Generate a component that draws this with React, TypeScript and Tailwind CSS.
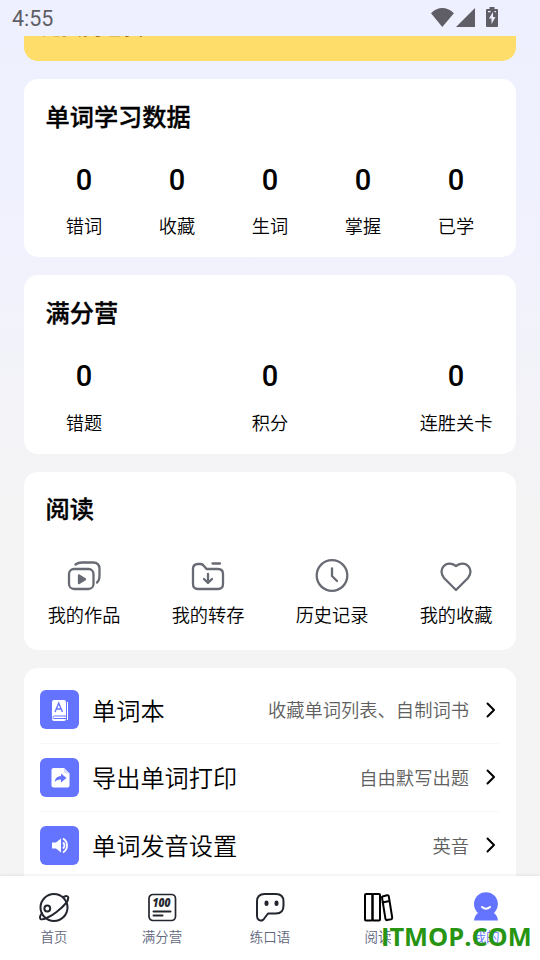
import type { ReactNode } from "react";

function Stats({ title, items }: { title: string; items: string[] }) {
  return (
    <section className="h-[178.5px] shrink-0 rounded-[14px] bg-white px-6">
      <h2 className="-ml-[2.5px] pt-[21px] text-[24.2px] font-medium leading-[31px] text-black [-webkit-text-stroke:0.35px_black]">{title}</h2>
      <div className="mt-[31px] flex justify-between">
        {items.map((label) => (
          <div key={label} className="flex w-[72px] flex-col items-center">
            <span className="font-[Roboto] text-[29px] font-medium leading-9">0</span>
            <span className="mt-[14.5px] text-[18.2px] font-[350] leading-[27px] whitespace-nowrap">{label}</span>
          </div>
        ))}
      </div>
    </section>
  );
}

function Shortcut({ label, children }: { label: string; children: ReactNode }) {
  return (
    <div className="flex w-[72px] flex-col items-center">
      <svg width="36" height="36" viewBox="0 0 36 36" fill="none" stroke="#686b73" strokeWidth="2.3" strokeLinecap="round" strokeLinejoin="round">
        {children}
      </svg>
      <span className="mt-[7px] text-[18.2px] font-[350] leading-[27px] whitespace-nowrap">{label}</span>
    </div>
  );
}

function Row({ label, value, last, children }: { label: string; value: string; last?: boolean; children: ReactNode }) {
  return (
    <div className={last ? "flex h-[67.5px] items-center" : "flex h-[67.5px] items-center border-b border-[#f8f8f8]"}>
      <div className="flex size-[39px] items-center justify-center rounded-[6px] bg-[#6574ff]">
        <svg width="39" height="39" viewBox="0 0 39 39" fill="none">{children}</svg>
      </div>
      <span className="ml-[13px] text-[24.2px] font-[350] leading-9">{label}</span>
      <span className="ml-auto text-[18.3px] font-[350] text-[#606060]">{value}</span>
      <svg className="ml-[16px] mr-[2px]" width="12" height="18" viewBox="0 0 12 18" fill="none" stroke="black" strokeWidth="2" strokeLinecap="round" strokeLinejoin="round">
        <path d="M2.500 2.500 9 9l-6.500 6.500" />
      </svg>
    </div>
  );
}

function Tab({ label, active, children }: { label: string; active?: boolean; children: ReactNode }) {
  return (
    <div className="flex flex-1 flex-col items-center pt-[13px]">
      <svg width="36" height="36" viewBox="0 0 36 36" fill="none" stroke="#23262f" strokeWidth="2" strokeLinecap="round" strokeLinejoin="round">
        {children}
      </svg>
      <span className={active ? "mt-px text-[13.5px] font-[350] leading-5 text-[#6574ff]" : "mt-px text-[13.5px] font-[350] leading-5 text-[#626780]"}>{label}</span>
    </div>
  );
}

export default function App() {
  return (
    <div className="relative flex h-[960px] w-[540px] flex-col overflow-hidden bg-linear-to-b from-[#eef0ff] from-0% via-[#f0f1fe] via-20% to-[#f4f4f4] to-55% font-['Noto_Sans_CJK_SC',sans-serif] text-black">
      <header className="flex h-9 shrink-0 items-center justify-between pl-3 pr-[41px] text-[#5f5e66]">
        <span className="pt-[2px] font-[Roboto] text-[21.5px] leading-6">4:55</span>
        <svg width="70" height="24" viewBox="0 0 70 24" fill="currentColor">
          <path d="M2 7.200Q13.300-3 24.900 7.200L13.300 21ZM46 2v19H27Z" />
          <path fillRule="evenodd" d="M60.500 1h5v2H68q1 0 1 1v16q0 1-1 1H58q-1 0-1-1V4q0-1 1-1h2.500ZM64 6l-4 6.500h2.500V18l4-7H64ZM59 5h2.500v1.200H59ZM65.500 5H67v1.200h-1.500Z" />
        </svg>
      </header>

      <main className="flex min-h-0 flex-1 flex-col gap-[18px] overflow-hidden px-6">
        <div className="h-[24.5px] shrink-0 overflow-hidden rounded-b-[14px] bg-[#ffdd6b] pl-[17px]">
          <div className="-mt-[22px] text-[20.5px] font-bold leading-6 text-[#8d5a1b]">免费商包员</div>
        </div>
        <Stats title="单词学习数据" items={["错词", "收藏", "生词", "掌握", "已学"]} />
        <Stats title="满分营" items={["错题", "积分", "连胜关卡"]} />
        <section className="h-[178.5px] shrink-0 rounded-[14px] bg-white px-6">
          <h2 className="-ml-[2.5px] pt-[20.8px] text-[24.2px] font-medium leading-[31px] [-webkit-text-stroke:0.35px_black]">阅读</h2>
          <div className="mt-[34.7px] flex justify-between">
            <Shortcut label="我的作品">
              <rect x="3" y="11" width="24.5" height="20" rx="5" />
              <path d="M9.500 6.500Q12 4.500 16 4.500h11q6.500 0 6.500 6.500v6.500q0 5-2.500 7" />
              <path d="m13 17.500 6 3.800-6 3.800Z" fill="#686b73" />
            </Shortcut>
            <Shortcut label="我的转存">
              <path d="M3 11q0-5 5-5h2.500q2 0 3.500 2l2.500 3H28q5 0 5 5v10q0 5-5 5H8q-5 0-5-5ZM22.500 5.500h7.500M18 16v9m-4-4 4 4 4-4" />
            </Shortcut>
            <Shortcut label="历史记录">
              <circle cx="18" cy="17.5" r="15.300" />
              <path d="M18 10.500v7.500l5 5" />
            </Shortcut>
            <Shortcut label="我的收藏">
              <path d="M18 32 6 20C-1 11.500 8 1 18 8 28 1 37 11.500 30 20Z" />
            </Shortcut>
          </div>
        </section>
        <section className="h-[240px] shrink-0 rounded-[14px] bg-white pl-4 pr-[17px] pt-[8.5px]">
          <Row label="单词本" value="收藏单词列表、自制词书">
            <rect x="12" y="10" width="14" height="21" rx="2" fill="white" />
            <path d="M27.500 12v18" stroke="white" />
            <path d="M13 28.500v-1q0-1.500 1.500-1.500H26M13.500 28.500H26" stroke="#6574ff" />
            <path d="m15 22 3.700-9 3.700 9m-6.200-3h5" stroke="#6574ff" strokeWidth="1.4" />
          </Row>
          <Row label="导出单词打印" value="自由默写出题">
            <path d="M13.500 10H24l5.500 5.500v12q0 2-2 2h-14q-2 0-2-2V12q0-2 2-2Z" fill="white" />
            <path d="m24 10 5.500 5.500H26q-2 0-2-2Z" fill="#d7dcff" />
            <path d="M21 15.500 26.500 20 21 24.500v-3q-4-.5-6.500 2.500 1-6 6.500-6Z" fill="#6574ff" />
          </Row>
          <Row label="单词发音设置" value="英音" last>
            <path d="M12 16.500h4l5-4v14l-5-4h-4Z" fill="white" />
            <path d="M23 12.500q4 2.500 4 7t-4 7M23 16.500q3 3 0 6" stroke="white" strokeWidth="1.8" />
          </Row>
        </section>
      </main>

      <nav className="z-10 flex h-[84px] shrink-0 bg-white shadow-[0_-1px_3px_rgba(0,0,0,0.07)]">
        <Tab label="首页">
          <circle cx="18" cy="18.5" r="13.500" />
          <circle cx="11.300" cy="19.5" r="2.900" />
          <path d="M27.500 8q4.500-2 4.800.5c.4 4-7.300 11-11.800 14.500C15 27.500 6.500 31.500 4.500 30q-1.500-2 1.500-6" />
        </Tab>
        <Tab label="满分营">
          <rect x="5" y="5.5" width="26.5" height="26" rx="4" strokeWidth="1.7" />
          <text x="8.5" y="18" fill="#23262f" stroke="none" fontFamily="Open Sans" fontWeight="800" fontStyle="italic" fontSize="12" textLength="18" lengthAdjust="spacingAndGlyphs">100</text>
          <path d="M9.500 22.500h17M9.500 26.500h9" />
        </Tab>
        <Tab label="练口语">
          <path d="M5 12.500q0-7.500 7.500-7.500H24q7.500 0 7.500 7.500v4q0 8-7.500 8h-8l-4.500 6Q9.500 32.500 7 31q-2-1-2-4Z" />
          <path d="M14.500 13.500v1.500M24.500 13.500v1.500" strokeWidth="4" />
        </Tab>
        <Tab label="阅读">
          <g stroke="black" transform="translate(0 .5)">
            <rect x="5" y="4.5" width="7.5" height="26.5" rx="1" />
            <rect x="12.5" y="4.5" width="7.5" height="26.5" rx="1" />
            <path d="m22.500 7 4.500-1.200q1.500-.3 1.800 1L32.200 28q.2 1.500-1 1.800l-4.200.8q-1.200.2-1.500-1L22 8q-.1-.8.500-1Zm0 6 7-1.500" />
          </g>
        </Tab>
        <Tab label="我的" active>
          <path d="M10 24C2 16 7 3.200 18 3.200S34 16 26 24q3.500 2.500 4 7.500H6q.5-5 4-7.500Z" fill="#6574ff" stroke="none" />
          <path d="M14 18q4 3.500 8 0" stroke="white" />
        </Tab>
      </nav>
      <div className="absolute left-[381px] top-[920px] z-20 font-['Open_Sans',sans-serif] text-[25.4px] font-bold leading-8 whitespace-nowrap text-[#279413]">ITMOP.COM</div>
    </div>
  );
}
